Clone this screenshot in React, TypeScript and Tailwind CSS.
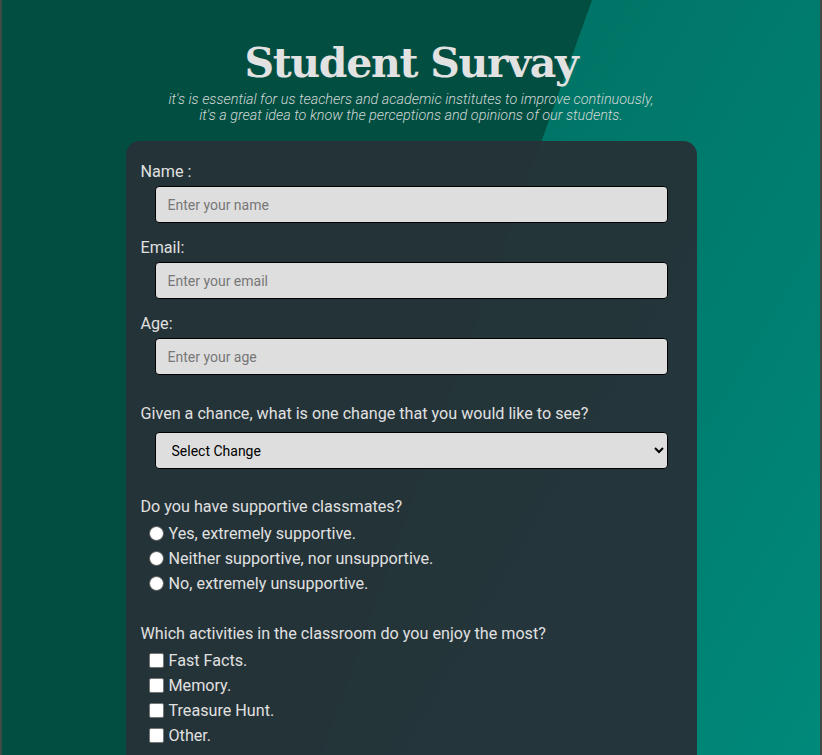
import { useState } from 'react'

const textFields = [
  { label: 'Name :', placeholder: 'Enter your name', type: 'text' },
  { label: 'Email:', placeholder: 'Enter your email', type: 'email' },
  { label: 'Age:', placeholder: 'Enter your age', type: 'number' },
]

const supportOptions = [
  'Yes, extremely supportive.',
  'Neither supportive, nor unsupportive.',
  'No, extremely unsupportive.',
]

const activities = ['Fast Facts.', 'Memory.', 'Treasure Hunt.', 'Other.']

const App = () => {
  const [support, setSupport] = useState('')

  return (
    <div className="relative min-h-screen overflow-hidden border-l-2 border-r-2 border-[#3f4a47] font-['Roboto','Liberation_Sans',sans-serif] text-[#e0e0e0]">
      {/* backdrop: teal gradient with a dark green slanted panel on the left */}
      <div className="absolute inset-0 bg-[linear-gradient(120deg,#00695b_0%,#007466_45%,#008a7b_100%)]" />
      <div className="absolute inset-0 bg-[#024e41] [clip-path:polygon(0_0,590px_0,320px_755px,0_755px)]" />

      <div className="relative flex flex-col items-center pb-10">
        <header className="pt-[35px] text-center">
          <h1 className="font-['DejaVu_Serif','Liberation_Serif',serif] text-[41px] font-bold leading-[56px] tracking-[-1.3px] text-[#e2e2e2]">
            Student Survay
          </h1>
          <p className="mt-px text-[14.4px] font-light italic leading-4 text-[#cfd8d6]">
            it's is essential for us teachers and academic institutes to improve continuously,
            <br />
            it's a great idea to know the perceptions and opinions of our students.
          </p>
        </header>

        <form className="mt-[17px] w-[571px] rounded-[14px] bg-[#263238]/95 px-[15px] pt-[19px] pb-8 text-[16.15px]">
          {textFields.map((field, i) => (
            <div key={field.label} className={i > 0 ? 'mt-[13px]' : ''}>
              <label className="block leading-6">{field.label}</label>
              <input
                type={field.type}
                placeholder={field.placeholder}
                className="mt-[2px] ml-[14px] block h-[37px] w-[513px] rounded-[4px] border border-black bg-[#dedede] px-3 text-sm text-black placeholder:text-[#777]"
              />
            </div>
          ))}

          <div className="mt-[27px]">
            <label className="block leading-6">
              Given a chance, what is one change that you would like to see?
            </label>
            <select
              defaultValue=""
              className="mt-[6px] ml-[14px] block h-[37px] w-[513px] rounded-[4px] border border-black bg-[#dedede] px-3 text-sm text-black"
            >
              <option value="" disabled>
                Select Change
              </option>
              <option>More group projects</option>
              <option>Shorter lectures</option>
              <option>Other</option>
            </select>
          </div>

          <div className="mt-[26px]">
            <p className="leading-6">Do you have supportive classmates?</p>
            <div className="mt-[3px]">
              {supportOptions.map((opt) => (
                <label key={opt} className="flex h-[25px] items-center gap-[5px] pl-2">
                  <input
                    type="radio"
                    name="support"
                    checked={support === opt}
                    onChange={() => setSupport(opt)}
                    className="mb-[3px] h-[15px] w-[15px] shrink-0 appearance-none rounded-full border border-[#555] bg-white checked:border-[5px] checked:border-[#0a7bd6]"
                  />
                  {opt}
                </label>
              ))}
            </div>
          </div>

          <div className="mt-[25px]">
            <p className="leading-6">Which activities in the classroom do you enjoy the most?</p>
            <div className="mt-[3px]">
              {activities.map((act) => (
                <label key={act} className="flex h-[25px] items-center gap-[5px] pl-2">
                  <input
                    type="checkbox"
                    className="mb-[2px] h-[15px] w-[15px] shrink-0 appearance-none rounded-[2px] border border-[#767676] bg-white checked:bg-[#0a7bd6]"
                  />
                  {act}
                </label>
              ))}
            </div>
          </div>
        </form>
      </div>
    </div>
  )
}

export default App
